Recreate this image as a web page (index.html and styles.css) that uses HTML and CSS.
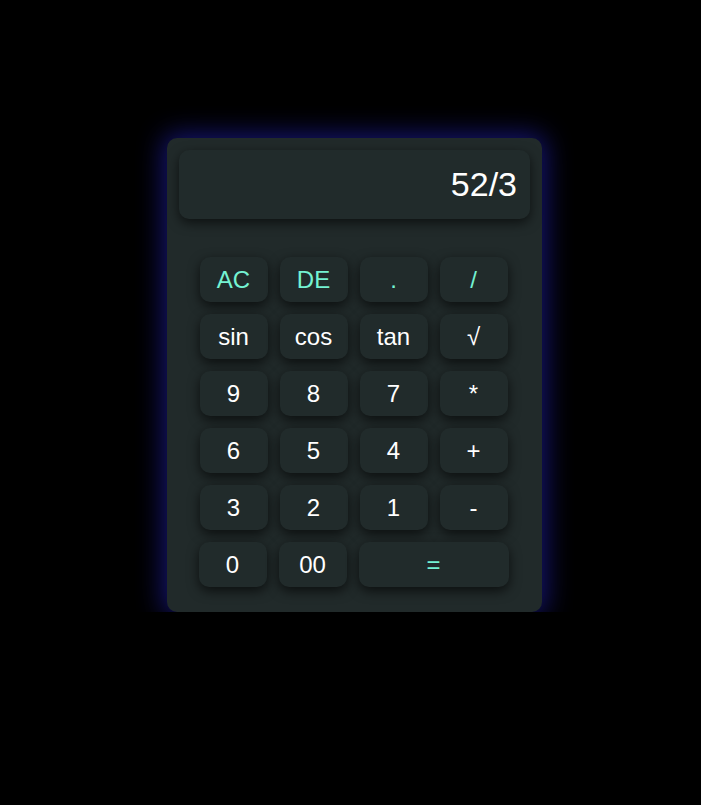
FILE: index.html
```html
<!DOCTYPE html>
<html>
<head>
<meta charset="utf-8">
<link rel="stylesheet" href="styles.css">
</head>
<body>
<div class="calc">
  <div class="display">52/3</div>
  <div class="keys">
    <div class="row">
      <button class="key accent">AC</button>
      <button class="key accent">DE</button>
      <button class="key accent">.</button>
      <button class="key accent">/</button>
    </div>
    <div class="row">
      <button class="key">sin</button>
      <button class="key">cos</button>
      <button class="key">tan</button>
      <button class="key">√</button>
    </div>
    <div class="row">
      <button class="key">9</button>
      <button class="key">8</button>
      <button class="key">7</button>
      <button class="key">*</button>
    </div>
    <div class="row">
      <button class="key">6</button>
      <button class="key">5</button>
      <button class="key">4</button>
      <button class="key">+</button>
    </div>
    <div class="row">
      <button class="key">3</button>
      <button class="key">2</button>
      <button class="key">1</button>
      <button class="key">-</button>
    </div>
    <div class="row">
      <button class="key">0</button>
      <button class="key">00</button>
      <button class="key wide accent">=</button>
    </div>
  </div>
</div>
</body>
</html>
```
FILE: styles.css
```css
html, body {
  margin: 0;
  padding: 0;
  background: #000;
}
body {
  font-family: "Liberation Sans", Arial, sans-serif;
  padding-top: 138px;
  padding-left: 167px;
}
.calc {
  width: 375px;
  height: 474px;
  box-sizing: border-box;
  background: #212a2a;
  border-radius: 10px;
  padding: 12px;
  box-shadow: 0 0 26px 4px rgba(35, 35, 190, 0.6);
}
.display {
  height: 69px;
  box-sizing: border-box;
  background: #212b2b;
  border-radius: 10px;
  box-shadow: 0 4px 12px rgba(0, 0, 0, 0.6);
  color: #fff;
  font-size: 34px;
  text-align: right;
  padding: 15px 13px 0 0;
}
.keys {
  margin-top: 38px;
  display: flex;
  flex-direction: column;
  gap: 12px;
  margin-left: -13px;
  margin-right: -11px;
}
.row {
  display: flex;
  justify-content: center;
  gap: 12px;
}
.key {
  width: 68px;
  height: 45px;
  border: none;
  border-radius: 10px;
  background: #212b2b;
  color: #fff;
  font-family: "Liberation Sans", Arial, sans-serif;
  font-size: 24px;
  padding: 0;
  box-shadow: 0 4px 12px rgba(0, 0, 0, 0.65);
}
.key.wide {
  width: 150px;
}
.accent {
  color: #74f2d2;
}
```
